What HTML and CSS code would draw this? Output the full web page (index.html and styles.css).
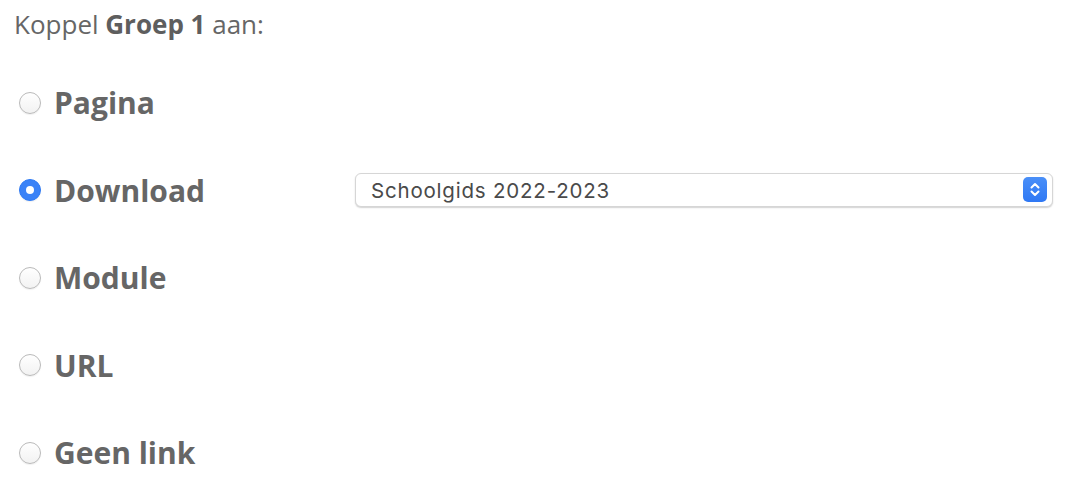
FILE: index.html
```html
<!DOCTYPE html>
<html lang="nl">
<head>
  <meta charset="UTF-8" />
  <meta name="viewport" content="width=device-width, initial-scale=1.0" />
  <title>Koppeling</title>
  <link rel="stylesheet" href="styles.css">
</head>
<body>
  <!-- Koppelen van een groep aan een doel -->
  <form class="link-form">
    <p class="link-intro">Koppel <strong>Groep 1</strong> aan:</p>

    <div class="link-options">
      <div class="link-row">
        <label class="link-option">
          <input type="radio" name="linkType" value="page" />
          <span>Pagina</span>
        </label>
      </div>

      <div class="link-row">
        <label class="link-option">
          <input type="radio" name="linkType" value="download" checked />
          <span>Download</span>
        </label>
        <!-- Keuzelijst met downloads -->
        <div class="select-wrap">
          <select name="download" aria-label="Download">
            <option value="schoolgids">Schoolgids 2022-2023</option>
          </select>
          <span class="select-arrows" aria-hidden="true">
            <svg width="24" height="25" viewBox="0 0 24 25">
              <path d="M8.5 10.5 L12 7 L15.5 10.5" />
              <path d="M8.5 14.5 L12 18 L15.5 14.5" />
            </svg>
          </span>
        </div>
      </div>

      <div class="link-row">
        <label class="link-option">
          <input type="radio" name="linkType" value="module" />
          <span>Module</span>
        </label>
      </div>

      <div class="link-row">
        <label class="link-option">
          <input type="radio" name="linkType" value="url" />
          <span>URL</span>
        </label>
      </div>

      <div class="link-row">
        <label class="link-option">
          <input type="radio" name="linkType" value="none" />
          <span>Geen link</span>
        </label>
      </div>
    </div>
  </form>
</body>
</html>
```

FILE: styles.css
```css
/* Basis */
:root {
  --color-text: #666;
  --color-accent: #3a82f7;
  --font-base: 'Open Sans', sans-serif;
  --font-system: 'Inter', 'Liberation Sans', sans-serif;
}

* {
  margin: 0;
  padding: 0;
  box-sizing: border-box;
}

body {
  font-family: var(--font-base);
  color: var(--color-text);
  background-color: #fff;
}

/* Formulier */
.link-form {
  padding: 6px 14px;
}

.link-intro {
  font-size: 26px;
  line-height: 36px;
}

.link-intro strong {
  font-weight: 700;
  color: #5e5e5e;
}

.link-options {
  display: grid;
  row-gap: 47.5px;
  margin-top: 40px;
}

.link-row {
  display: grid;
  grid-template-columns: 341px 698px;
  align-items: center;
  height: 40px;
}

.link-option {
  display: flex;
  align-items: center;
  gap: 13px;
  font-size: 30px;
  font-weight: 700;
  cursor: pointer;
  padding-left: 5px;
}

/* Radioknoppen in macOS-stijl */
.link-option input {
  appearance: none;
  -webkit-appearance: none;
  width: 22px;
  height: 22px;
  border-radius: 50%;
  border: 1px solid #bababa;
  background: linear-gradient(#fff, #f2f2f2);
  box-shadow: 0 1px 1px rgba(0, 0, 0, 0.06);
  display: grid;
  place-items: center;
  flex-shrink: 0;
}

.link-option input:checked {
  border-color: #2f7bf5;
  background: var(--color-accent);
}

.link-option input:checked::after {
  content: "";
  width: 8px;
  height: 8px;
  border-radius: 50%;
  background: #fff;
}

/* Keuzelijst */
.select-wrap {
  position: relative;
  height: 34px;
}

.select-wrap select {
  appearance: none;
  -webkit-appearance: none;
  width: 100%;
  height: 100%;
  padding: 0 40px 0 15px;
  border: 1px solid #d6d6d6;
  border-radius: 6px;
  background: #fff;
  box-shadow: 0 1px 1.5px rgba(0, 0, 0, 0.18);
  font-family: var(--font-system);
  font-size: 20.5px;
  letter-spacing: 0.8px;
  color: #4a4a4a;
}

.select-arrows {
  position: absolute;
  top: 4px;
  right: 6px;
  width: 24px;
  height: 25px;
  border-radius: 5px;
  background: linear-gradient(#4a8ff8, #2f78f4);
  pointer-events: none;
}

.select-arrows svg {
  display: block;
}

.select-arrows path {
  fill: none;
  stroke: #fff;
  stroke-width: 2;
  stroke-linecap: round;
  stroke-linejoin: round;
}
```
